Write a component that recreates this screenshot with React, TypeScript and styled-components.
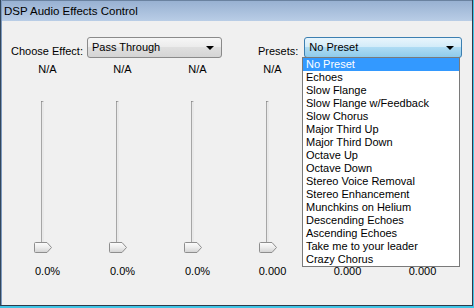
import React from "react";
import styled, { createGlobalStyle } from "styled-components";

const GlobalStyle = createGlobalStyle`
  html, body {
    margin: 0;
    padding: 0;
    background: #f0f0f0;
  }
  body {
    font-family: "Liberation Sans", Arial, sans-serif;
    font-size: 11px;
    color: #000;
  }
`;

const Frame = styled.div`
  width: 474px;
  height: 308px;
  box-sizing: border-box;
  border-right: 1px solid #3fc4e6;
  border-bottom: 2px solid #3fc4e6;
  background: #243342;
  overflow: hidden;
`;

const Window = styled.div`
  height: 100%;
  box-sizing: border-box;
  display: flex;
  flex-direction: column;
  border-left: 1px solid #33475b;
  border-right: 1px solid #2c3c4c;
  border-bottom: 1px solid #2c3c4c;
  background: #7d9ac0;
  padding-left: 1px;
`;

const TitleBar = styled.div`
  height: 21px;
  flex-shrink: 0;
  display: flex;
  align-items: center;
  padding-left: 2px;
  font-size: 11.5px;
  background: linear-gradient(#98b1d2, #b9cde6);
  border-top: 1px solid #6a82a0;
  box-sizing: border-box;
`;

const Client = styled.div`
  flex: 1;
  position: relative;
  background: #f0f0f0;
  padding: 16px 0 0 8px;
`;

const TopRow = styled.div`
  display: flex;
  align-items: flex-end;
  height: 21px;
`;

const Group = styled.div<{ $gap: number; $ml?: number }>`
  display: flex;
  align-items: flex-end;
  gap: ${({ $gap }) => $gap}px;
  margin-left: ${({ $ml }) => $ml ?? 0}px;
`;

const Label = styled.span`
  line-height: 13px;
  margin-left: 1px;
`;

const SelectBox = styled.div<{ $w: number; $active?: boolean }>`
  position: relative;
  width: ${({ $w }) => $w}px;
  height: 21px;
  box-sizing: border-box;
  border: 1px solid ${({ $active }) => ($active ? "#3c7fb1" : "#8a8a8a")};
  border-radius: 3px;
  background: ${({ $active }) =>
    $active
      ? "linear-gradient(#e9f5fc 0%, #d3ecf9 45%, #aedbf3 50%, #8fcbeb 100%)"
      : "linear-gradient(#f6f6f6 0%, #ececec 45%, #dfdfdf 50%, #d4d4d4 100%)"};
  display: flex;
  align-items: center;
  padding-left: 4px;
  line-height: 13px;
  padding-bottom: 1px;
`;

const Arrow = styled.span`
  position: absolute;
  right: 7px;
  top: 8px;
  width: 0;
  height: 0;
  border-left: 4px solid transparent;
  border-right: 4px solid transparent;
  border-top: 4px solid #000;
`;

const List = styled.div`
  position: absolute;
  left: 300px;
  top: 36px;
  width: 158px;
  box-sizing: border-box;
  border: 1px solid #7a7a7a;
  background: #fff;
  z-index: 2;
`;

const Item = styled.div<{ $selected?: boolean }>`
  height: 13px;
  line-height: 13px;
  padding-left: 3px;
  white-space: nowrap;
  background: ${({ $selected }) => ($selected ? "#3399ff" : "transparent")};
  color: ${({ $selected }) => ($selected ? "#fff" : "#000")};
`;

const Columns = styled.div`
  display: flex;
`;

const Column = styled.div`
  width: 75px;
  display: flex;
  flex-direction: column;
  align-items: center;
`;

const ColText = styled.div<{ $mt: number; $covered?: boolean }>`
  line-height: 13px;
  margin-top: ${({ $mt }) => $mt}px;
  visibility: ${({ $covered }) => ($covered ? "hidden" : "visible")};
`;

const Slider = styled.div`
  position: relative;
  width: 19px;
  height: 152px;
  margin-top: 25px;
  margin-right: 8px;
`;

const Track = styled.div`
  position: absolute;
  left: 7px;
  top: 0;
  bottom: 4px;
  width: 1px;
  border-top: 1px solid #8c8c8c;
  background: #a6a6a6;
  border-right: 2px solid #e9e9e9;
`;

const Thumb = styled.svg`
  position: absolute;
  left: 0;
  bottom: 0;
`;

const presets = [
  "No Preset",
  "Echoes",
  "Slow Flange",
  "Slow Flange w/Feedback",
  "Slow Chorus",
  "Major Third Up",
  "Major Third Down",
  "Octave Up",
  "Octave Down",
  "Stereo Voice Removal",
  "Stereo Enhancement",
  "Munchkins on Helium",
  "Descending Echoes",
  "Ascending Echoes",
  "Take me to your leader",
  "Crazy Chorus",
];

const values = ["0.0%", "0.0%", "0.0%", "0.000", "0.000", "0.000"];

const ThumbIcon = () => (
  <Thumb width="19" height="11" viewBox="0 0 19 11">
    <defs>
      <linearGradient id="tg" x1="0" y1="0" x2="0" y2="1">
        <stop offset="0" stopColor="#fdfdfd" />
        <stop offset="0.5" stopColor="#ececec" />
        <stop offset="1" stopColor="#d2d2d2" />
      </linearGradient>
    </defs>
    <path
      d="M1.5 0.5 H13 L17.5 5.5 L13 10.5 H1.5 Q0.5 10.5 0.5 9.5 V1.5 Q0.5 0.5 1.5 0.5 Z"
      fill="url(#tg)"
      stroke="#8e8e8e"
    />
  </Thumb>
);

export default function App() {
  return (
    <>
      <GlobalStyle />
      <Frame>
        <Window>
          <TitleBar>DSP Audio Effects Control</TitleBar>
          <Client>
            <TopRow>
              <Group $gap={4}>
                <Label>Choose Effect:</Label>
                <SelectBox $w={135}>
                  Pass Through
                  <Arrow />
                </SelectBox>
              </Group>
              <Group $gap={6} $ml={35}>
                <Label>Presets:</Label>
                <SelectBox $w={158} $active>
                  No Preset
                  <Arrow />
                </SelectBox>
              </Group>
            </TopRow>
            <Columns>
              {values.map((v, i) => (
                <Column key={i}>
                  <ColText $mt={5} $covered={i > 3}>
                    N/A
                  </ColText>
                  <Slider>
                    <Track />
                    <ThumbIcon />
                  </Slider>
                  <ColText $mt={12}>{v}</ColText>
                </Column>
              ))}
            </Columns>
            <List>
              {presets.map((p, i) => (
                <Item key={p} $selected={i === 0}>
                  {p}
                </Item>
              ))}
            </List>
          </Client>
        </Window>
      </Frame>
    </>
  );
}
